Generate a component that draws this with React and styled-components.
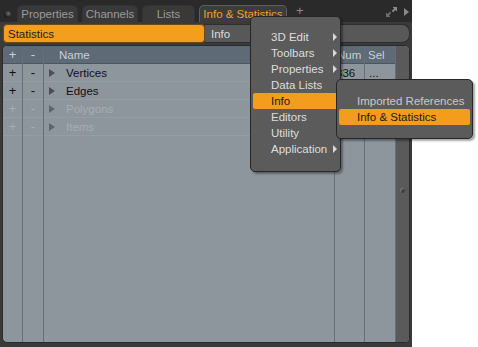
import React from "react";
import styled, { createGlobalStyle } from "styled-components";

const Global = createGlobalStyle`
  body {
    margin: 0;
    background: #ffffff;
    font-family: "Liberation Sans", Arial, sans-serif;
    font-size: 11px;
  }
`;

const Frame = styled.div`
  position: relative;
  width: 412px;
  height: 347px;
  background: #3a3a3a;
  display: flex;
  flex-direction: column;
  overflow: visible;
`;

const TabBar = styled.div`
  height: 22px;
  background: #2a2a2a;
  display: flex;
  align-items: flex-end;
  padding-left: 3px;
  box-sizing: border-box;
`;

const Knob = styled.div`
  width: 7px;
  height: 7px;
  border-radius: 50%;
  background: radial-gradient(circle at 65% 35%, #6a6a6a 0, #1a1a1a 70%);
  margin: 0 6px 4px 1px;
`;

const Tab = styled.div`
  width: ${p => p.w}px;
  height: 17px;
  margin-right: 4px;
  box-sizing: border-box;
  border-radius: 5px 5px 0 0;
  background: ${p => (p.active ? "#3c3c3c" : "#393939")};
  border: 1px solid ${p => (p.active ? "#5e5e5e" : "#333")};
  border-bottom: none;
  color: ${p => (p.active ? "#f3a124" : "#9b9b9b")};
  font-size: 11.5px;
  display: flex;
  align-items: center;
  justify-content: center;
  white-space: nowrap;
  overflow: hidden;
`;

const Plus = styled.div`
  color: #8a8a8a;
  font-size: 13px;
  margin: 0 0 4px 5px;
`;

const BarIcons = styled.div`
  margin-left: auto;
  display: flex;
  align-items: center;
  gap: 6px;
  padding: 0 3px 4px 0;
`;

const FilterRow = styled.div`
  display: flex;
  padding: 2px 2px 1px 3px;
  height: 22px;
  box-sizing: border-box;
`;

const Field = styled.div`
  height: 19px;
  box-sizing: border-box;
  display: flex;
  align-items: center;
  padding-left: ${p => (p.active ? 4 : 6)}px;
  font-size: 11.5px;
  ${p =>
    p.active
      ? `width: 202px; background: #f49e1e; color: #1c1c1c; border: 1px solid #6a4a10; border-radius: 4px;`
      : `flex: 1; background: #585858; color: #dcdcdc; border: 1px solid #2e2e2e; border-left: none; border-radius: 0 8px 8px 0;`}
`;

const List = styled.div`
  flex: 1;
  margin: 1px 2px 4px 2px;
  display: flex;
  border: 1px solid #2a2a2a;
  border-radius: 5px;
  overflow: hidden;
  background: #8e969d;
`;

const Column = styled.div`
  width: ${p => (p.w ? `${p.w}px` : "auto")};
  flex: ${p => (p.w ? "none" : 1)};
  border-right: 1px solid #676f76;
  display: flex;
  flex-direction: column;
`;

const Head = styled.div`
  height: 17px;
  background: #5e6a75;
  border-bottom: 1px solid #4c5660;
  color: #c9d0d6;
  display: flex;
  align-items: center;
  justify-content: ${p => (p.center ? "center" : "flex-start")};
  padding-left: ${p => p.pad || 0}px;
  font-size: ${p => (p.center ? 13 : 11.5)}px;
`;

const Cell = styled.div`
  height: 18px;
  box-sizing: border-box;
  border-bottom: 1px solid #959ca3;
  display: flex;
  align-items: center;
  justify-content: ${p => (p.center ? "center" : "flex-start")};
  padding-left: ${p => p.pad || 0}px;
  color: ${p => (p.dim ? "#a7adb2" : "#111")};
  font-size: ${p => (p.center ? 13 : 11.5)}px;
  gap: 11px;
`;

const Arrow = styled.span`
  width: 0;
  height: 0;
  border-top: 4px solid transparent;
  border-bottom: 4px solid transparent;
  border-left: 6px solid ${p => (p.dim ? "#5e656b" : "#4a5056")};
`;

const Scroll = styled.div`
  width: 13px;
  background: #5a5a5a;
  display: flex;
  justify-content: center;
  padding-top: 142px;
`;

const Dot = styled.div`
  width: 5px;
  height: 5px;
  border-radius: 50%;
  background: #444;
  box-shadow: inset 1px 1px 0 #777;
`;

const Menu = styled.div`
  position: absolute;
  left: ${p => p.x}px;
  top: ${p => p.y}px;
  width: ${p => p.w}px;
  box-sizing: border-box;
  padding: ${p => p.pt}px 2px ${p => p.pb}px 2px;
  background: #5b5b5b;
  border: 1px solid #262626;
  border-radius: 5px;
  box-shadow: 2px 2px 2px rgba(0, 0, 0, 0.35);
`;

const Item = styled.div`
  height: 16px;
  display: flex;
  align-items: center;
  justify-content: space-between;
  padding-left: ${p => p.pad}px;
  padding-right: 1px;
  border-radius: 2px;
  font-size: 11.5px;
  white-space: nowrap;
  background: ${p => (p.hot ? "#f39c1d" : "transparent")};
  color: ${p => (p.hot ? "#1b1b1b" : p.dim ? "#c9c9c9" : "#dedede")};
`;

const SubArrow = styled.span`
  width: 0;
  height: 0;
  border-top: 4px solid transparent;
  border-bottom: 4px solid transparent;
  border-left: 4px solid #d8d8d8;
`;

const rows = [
  { name: "Vertices", dim: false },
  { name: "Edges", dim: false },
  { name: "Polygons", dim: true },
  { name: "Items", dim: true }
];

const menuItems = [
  { label: "3D Edit", sub: true },
  { label: "Toolbars", sub: true },
  { label: "Properties", sub: true },
  { label: "Data Lists" },
  { label: "Info", hot: true },
  { label: "Editors" },
  { label: "Utility" },
  { label: "Application", sub: true }
];

export default function App() {
  return (
    <Frame>
      <Global />
      <TabBar>
        <Knob />
        <Tab w={61}>Properties</Tab>
        <Tab w={56}>Channels</Tab>
        <Tab w={53}>Lists</Tab>
        <Tab w={88} active>
          Info &amp; Statistics
        </Tab>
        <Plus>+</Plus>
        <BarIcons>
          <svg width="13" height="12" viewBox="0 0 13 12">
            <path d="M7.5 1h4.5v4.5L10.4 3.9 8.1 6.2 6.8 4.9 9.1 2.6z" fill="#8c8c8c" />
            <path d="M5.5 11H1V6.5l1.6 1.6 2.3-2.3 1.3 1.3-2.3 2.3z" fill="#6e6e6e" />
          </svg>
          <svg width="5" height="8" viewBox="0 0 5 8">
            <path d="M0 0l5 4-5 4z" fill="#8a8a8a" />
          </svg>
        </BarIcons>
      </TabBar>

      <FilterRow>
        <Field active>Statistics</Field>
        <Field>Info</Field>
      </FilterRow>

      <List>
        <Column w={19}>
          <Head center>+</Head>
          {rows.map(r => (
            <Cell center dim={r.dim} key={r.name}>
              +
            </Cell>
          ))}
        </Column>
        <Column w={20}>
          <Head center>-</Head>
          {rows.map(r => (
            <Cell center dim={r.dim} key={r.name}>
              -
            </Cell>
          ))}
        </Column>
        <Column>
          <Head pad={15}>Name</Head>
          {rows.map(r => (
            <Cell pad={5} dim={r.dim} key={r.name}>
              <Arrow dim={r.dim} />
              {r.name}
            </Cell>
          ))}
        </Column>
        <Column w={29}>
          <Head pad={2}>Num</Head>
          <Cell pad={1}>336</Cell>
        </Column>
        <Column w={30}>
          <Head pad={3}>Sel</Head>
          <Cell pad={4}>...</Cell>
        </Column>
        <Scroll>
          <Dot />
        </Scroll>
      </List>

      <Menu x={250} y={16} w={91} pt={12} pb={14}>
        {menuItems.map(m => (
          <Item key={m.label} pad={18} hot={m.hot}>
            {m.label}
            {m.sub && <SubArrow />}
          </Item>
        ))}
      </Menu>

      <Menu x={336} y={79} w={137} pt={13} pb={13}>
        <Item pad={18} dim>
          Imported References
        </Item>
        <Item pad={18} hot>
          Info &amp; Statistics
        </Item>
      </Menu>
    </Frame>
  );
}
